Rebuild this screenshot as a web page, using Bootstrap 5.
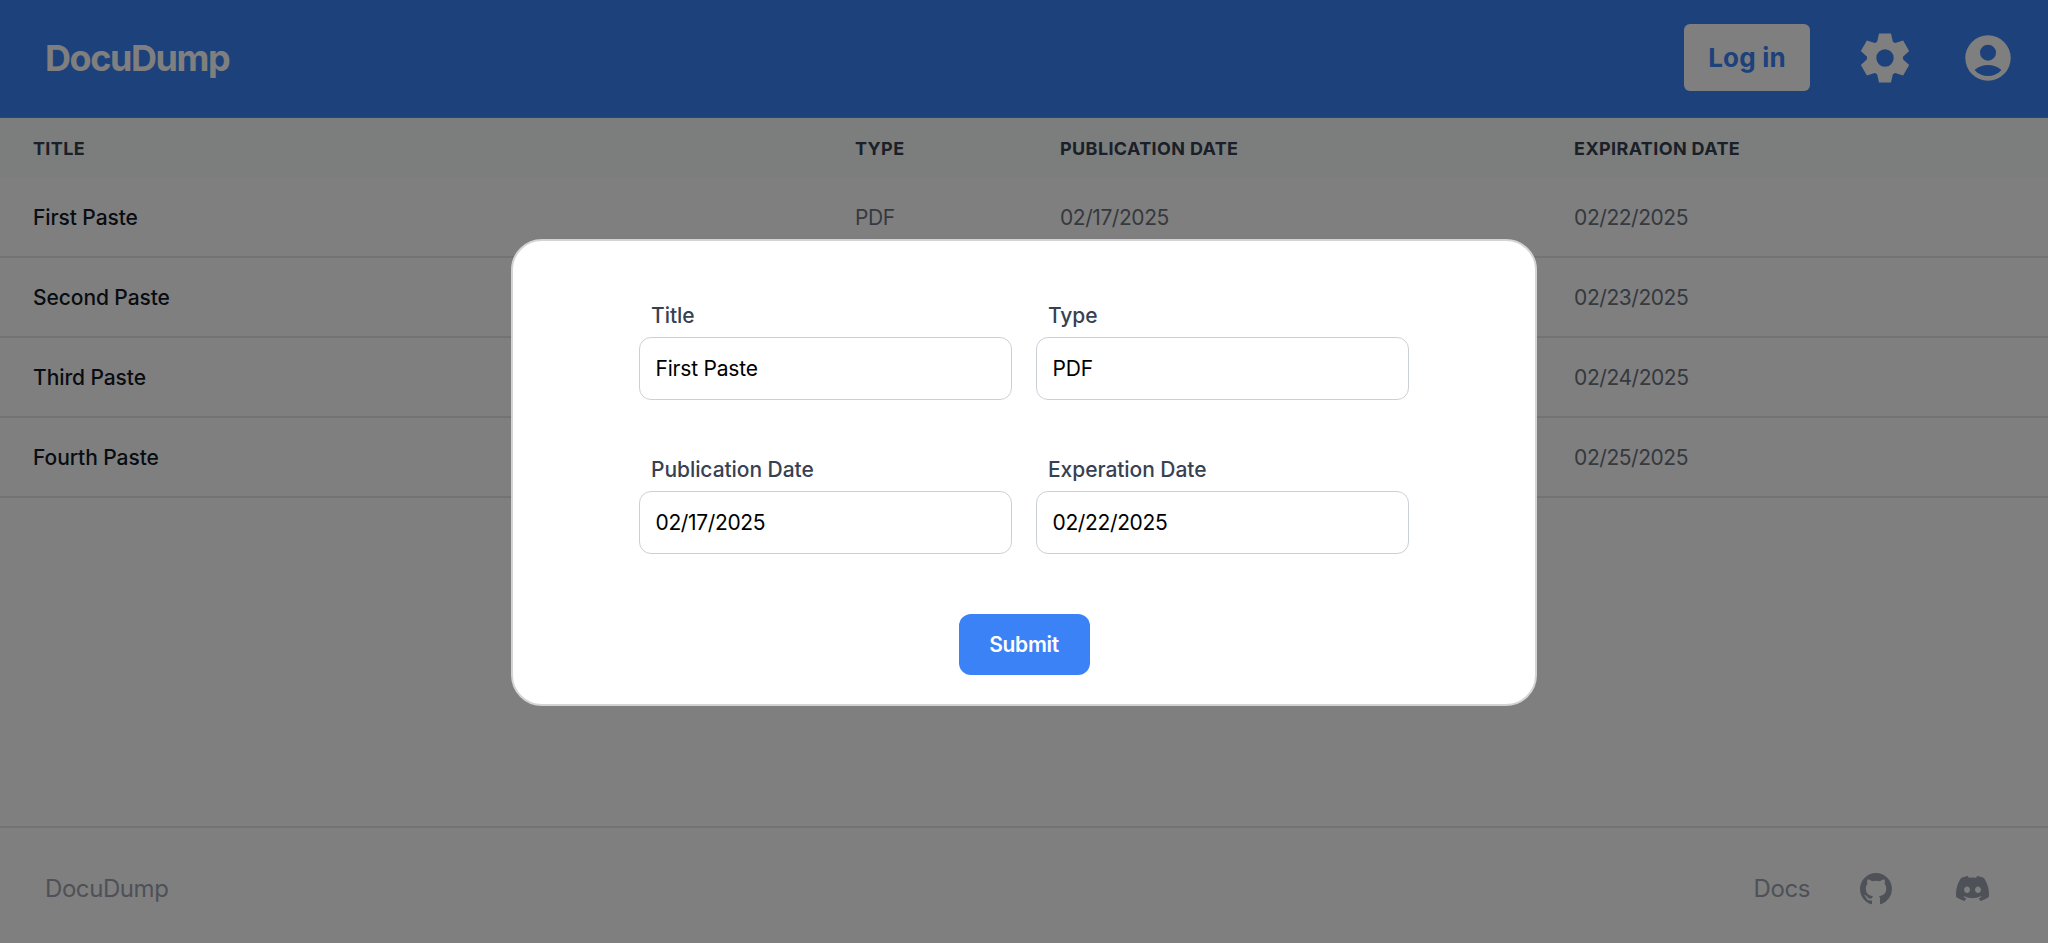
<!DOCTYPE html>
<html lang="en">
<head>
<meta charset="utf-8">
<meta name="viewport" content="width=device-width, initial-scale=1">
<title>DocuDump</title>
<link href="https://cdn.jsdelivr.net/npm/bootstrap@5.3.0/dist/css/bootstrap.min.css" rel="stylesheet">
<style>
  body { font-family: Inter, "Liberation Sans", sans-serif; font-size: 21px; color: #111827; height: 943px; overflow: hidden; }
  .topbar { height: 118px; background: #3b82f6; border-bottom: 1px solid #5a8cdc; padding: 0 37px 3px 45px; }
  .topbar .navbar-brand { font-size: 36px; font-weight: 700; letter-spacing: -1.42px; color: #fff; padding: 2px 0 0; }
  .btn-login { width: 126px; height: 67px; padding: 0; border: 0; border-radius: 6px; background: #fff; color: #3b82f6; font-size: 26px; font-weight: 700; letter-spacing: .2px; }
  .icon-gear { width: 50px; height: 50px; margin: 1px 0 0 50px; }
  .icon-user { width: 46px; height: 46px; margin: 1px 0 0 55px; }
  .docs-table { table-layout: fixed; margin: 0; border-collapse: separate; border-spacing: 0; }
  .docs-table > :not(caption) > * > * { padding: 0 33px; vertical-align: middle; border: 0; box-shadow: none; }
  .docs-table thead th { height: 60px; background: #f7fcf9; color: #374151; font-size: 18px; font-weight: 700; letter-spacing: .36px; }
  .docs-table > tbody > tr > td { height: 80px; padding-top: 1px; border-bottom: 2px solid #e5e7eb; color: #6b7280; letter-spacing: -.45px; background: #fff; }
  .docs-table > tbody > tr > td:first-child { color: #111827; font-weight: 500; letter-spacing: -.08px; }
  .site-footer { height: 117px; border-top: 2px solid #e5e7eb; padding: 6px 59px 0 45px; font-size: 24px; letter-spacing: -.42px; color: #9ca3af; }
  .icon-github { width: 32px; height: 32px; margin-left: 50px; }
  .icon-discord { width: 33px; height: 33px; margin-left: 64px; }
  .modal-backdrop.show { opacity: .5; }
  .edit-modal { --bs-modal-width: 1026px; --bs-modal-margin: 0px; }
  .edit-modal .modal-dialog { padding-top: 2px; }
  .edit-modal .modal-content { height: 467px; border: 2px solid #d4d4d4; border-radius: 31px; background-clip: border-box; padding: 59px 126px 29px; color: #000; }
  .field-grid { row-gap: 54px; --bs-gutter-x: 24px; }
  .field-grid .form-label { display: block; height: 32px; line-height: 32px; margin: 0 0 5px 12px; color: #374151; font-weight: 500; letter-spacing: -.06px; }
  .field-grid .form-control { height: 63px; border: 1.5px solid #cbd0d8; border-radius: 12px; padding: 0 15.5px; font-size: 21px; color: #000; letter-spacing: -.36px; }
  .field-grid .form-control.worded { letter-spacing: -.2px; }
  .btn-submit { width: 131px; height: 61px; border: 0; border-radius: 12px; background: #3b82f6; color: #fff; font-size: 21px; font-weight: 600; letter-spacing: -.3px; padding: 0; }
</style>
</head>
<body class="d-flex flex-column modal-open">
  <nav class="topbar navbar flex-nowrap flex-shrink-0">
    <a class="navbar-brand me-auto" href="#">DocuDump</a>
    <button class="btn btn-login" type="button">Log in</button>
    <svg class="icon-gear" viewBox="-25 -25 50 50" fill="#fff" aria-hidden="true">
      <circle r="13.4" fill="none" stroke="#fff" stroke-width="9.4"/>
      <path id="tooth" d="M-8 -15.5 L-6 -24.4 H6 L8 -15.5Z"/>
      <use href="#tooth" transform="rotate(60)"/><use href="#tooth" transform="rotate(120)"/><use href="#tooth" transform="rotate(180)"/><use href="#tooth" transform="rotate(240)"/><use href="#tooth" transform="rotate(300)"/>
    </svg>
    <svg class="icon-user" viewBox="-23 -23 46 46" fill="#fff" fill-rule="evenodd" aria-hidden="true">
      <path d="M0 -22.7A22.7 22.7 0 1 1 0 22.7A22.7 22.7 0 1 1 0 -22.7ZM0 -13.3A8 8 0 1 0 0 2.7A8 8 0 1 0 0 -13.3ZM-13.4 12C-10 8.6 -4.5 7 0 7S10 8.6 13.4 12C10 16 5 18 0 18S-10 16 -13.4 12Z"/>
    </svg>
  </nav>
  <main class="flex-grow-1">
    <table class="table docs-table">
      <colgroup><col style="width:40.14%"><col style="width:10.01%"><col style="width:25.1%"><col></colgroup>
      <thead><tr class="text-uppercase"><th>Title</th><th>Type</th><th>Publication Date</th><th>Expiration Date</th></tr></thead>
      <tbody>
        <tr><td>First Paste</td><td>PDF</td><td>02/17/2025</td><td>02/22/2025</td></tr>
        <tr><td>Second Paste</td><td></td><td></td><td>02/23/2025</td></tr>
        <tr><td>Third Paste</td><td></td><td></td><td>02/24/2025</td></tr>
        <tr><td>Fourth Paste</td><td></td><td></td><td>02/25/2025</td></tr>
      </tbody>
    </table>
  </main>
  <footer class="site-footer d-flex align-items-center flex-shrink-0">
    <span class="me-auto">DocuDump</span>
    <span>Docs</span>
    <svg class="icon-github" viewBox="0 0 16 16" fill="currentColor" aria-hidden="true"><path d="M8 0C3.58 0 0 3.58 0 8c0 3.54 2.29 6.53 5.47 7.59.4.07.55-.17.55-.38 0-.19-.01-.82-.01-1.49-2.01.37-2.53-.49-2.69-.94-.09-.23-.48-.94-.82-1.13-.28-.15-.68-.52-.01-.53.63-.01 1.08.58 1.23.82.72 1.21 1.87.87 2.33.66.07-.52.28-.87.51-1.07-1.78-.2-3.64-.89-3.64-3.95 0-.87.31-1.59.82-2.15-.08-.2-.36-1.02.08-2.12 0 0 .67-.21 2.2.82.64-.18 1.32-.27 2-.27.68 0 1.36.09 2 .27 1.53-1.04 2.2-.82 2.2-.82.44 1.1.16 1.92.08 2.12.51.56.82 1.27.82 2.15 0 3.07-1.87 3.75-3.65 3.95.29.25.54.73.54 1.48 0 1.07-.01 1.93-.01 2.2 0 .21.15.46.55.38A8.012 8.012 0 0 0 16 8c0-4.42-3.58-8-8-8z"/></svg>
    <svg class="icon-discord" viewBox="0 0 16 16" fill="currentColor" aria-hidden="true"><path d="M13.545 2.907a13.227 13.227 0 0 0-3.257-1.011.05.05 0 0 0-.052.025c-.141.25-.297.577-.406.833a12.19 12.19 0 0 0-3.658 0 8.258 8.258 0 0 0-.412-.833.051.051 0 0 0-.052-.025c-1.125.194-2.22.534-3.257 1.011a.041.041 0 0 0-.021.018C.356 6.024-.213 9.047.066 12.032c.001.014.01.028.021.037a13.276 13.276 0 0 0 3.995 2.02.05.05 0 0 0 .056-.019c.308-.42.582-.863.818-1.329a.05.05 0 0 0-.01-.059.051.051 0 0 0-.018-.011 8.875 8.875 0 0 1-1.248-.595.05.05 0 0 1-.02-.066.051.051 0 0 1 .015-.019c.084-.063.168-.129.248-.195a.05.05 0 0 1 .051-.007c2.619 1.196 5.454 1.196 8.041 0a.052.052 0 0 1 .053.007c.08.066.164.132.248.195a.051.051 0 0 1-.004.085 8.254 8.254 0 0 1-1.249.594.05.05 0 0 0-.03.03.052.052 0 0 0 .003.041c.24.465.515.909.817 1.329a.05.05 0 0 0 .056.019 13.235 13.235 0 0 0 4.001-2.02.049.049 0 0 0 .021-.037c.334-3.451-.559-6.449-2.366-9.106a.034.034 0 0 0-.02-.019Zm-8.198 7.307c-.789 0-1.438-.724-1.438-1.612 0-.889.637-1.613 1.438-1.613.807 0 1.45.73 1.438 1.613 0 .888-.637 1.612-1.438 1.612Zm5.316 0c-.788 0-1.438-.724-1.438-1.612 0-.889.637-1.613 1.438-1.613.807 0 1.451.73 1.438 1.613 0 .888-.631 1.612-1.438 1.612Z"/></svg>
  </footer>

  <div class="modal-backdrop show"></div>
  <div class="modal edit-modal d-block" tabindex="-1" role="dialog" aria-modal="true">
    <div class="modal-dialog modal-dialog-centered">
      <form class="modal-content">
        <div class="row field-grid">
          <div class="col-6"><label class="form-label" for="f-title">Title</label><input class="form-control worded" id="f-title" value="First Paste"></div>
          <div class="col-6"><label class="form-label" for="f-type">Type</label><input class="form-control worded" id="f-type" value="PDF"></div>
          <div class="col-6"><label class="form-label" for="f-pub">Publication Date</label><input class="form-control" id="f-pub" value="02/17/2025"></div>
          <div class="col-6"><label class="form-label" for="f-exp">Experation Date</label><input class="form-control" id="f-exp" value="02/22/2025"></div>
        </div>
        <button class="btn btn-submit mt-auto mx-auto" type="button">Submit</button>
      </form>
    </div>
  </div>
<script src="https://cdn.jsdelivr.net/npm/bootstrap@5.3.0/dist/js/bootstrap.bundle.min.js"></script>
</body>
</html>
